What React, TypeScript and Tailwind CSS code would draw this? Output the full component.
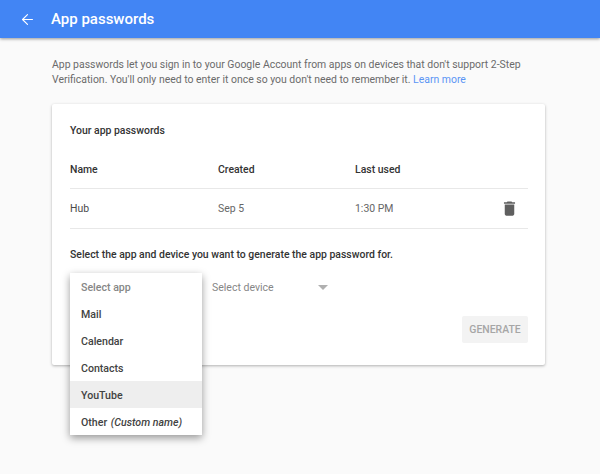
import { ArrowLeft } from "lucide-react";

const MENU = ["Mail", "Calendar", "Contacts", "YouTube"];

function TrashIcon() {
  return (
    <svg width="19" height="19" viewBox="0 0 24 24" fill="#5f5f5f">
      <path d="M6 19c0 1.1.9 2 2 2h8c1.1 0 2-.9 2-2V7H6v12zM19 4h-3.5l-1-1h-5l-1 1H5v2h14V4z" />
    </svg>
  );
}

export default function App() {
  return (
    <div className="w-[600px] h-[474px] overflow-hidden bg-[#fafafa] font-['Roboto',sans-serif] antialiased">
      <header className="relative h-[38px] bg-[#4285f4] shadow-[0_1px_3px_rgba(0,0,0,0.4)] flex items-center text-white">
        <ArrowLeft className="ml-[19px] w-[17px] h-[17px]" strokeWidth={1.6} />
        <h1 className="ml-[15px] text-[15px] leading-none font-medium">App passwords</h1>
      </header>

      <p className="mt-[19px] ml-[52px] w-[480px] text-[10.45px] leading-[15px] text-[#6b6b6b]">
        App passwords let you sign in to your Google Account from apps on devices that don't support 2-Step
        Verification. You'll only need to enter it once so you don't need to remember it.{" "}
        <span className="text-[#5a95f5]">Learn more</span>
      </p>

      <section className="relative mt-[17px] ml-[52px] w-[493px] h-[261px] bg-white rounded-[2px] shadow-[0_1px_3px_rgba(0,0,0,0.3)] pl-[18px] pr-[17px]">
        <h2 className="pt-[20px] text-[10.45px] leading-[13px] font-medium text-[#333333]">Your app passwords</h2>

        <div className="mt-[26px] h-[26px] flex text-[10.45px] leading-[13px] font-medium text-[#333333] border-b border-[#e8e8e8]">
          <span className="w-[148px]">Name</span>
          <span className="w-[137px]">Created</span>
          <span>Last used</span>
        </div>

        <div className="h-[40px] flex items-center text-[10.45px] text-[#666666] border-b border-[#e8e8e8]">
          <span className="w-[148px] text-[#4a4a4a]">Hub</span>
          <span className="w-[137px]">Sep 5</span>
          <span>1:30 PM</span>
          <span className="ml-auto mr-[9px] flex">
            <TrashIcon />
          </span>
        </div>

        <p className="mt-[19px] text-[10.45px] leading-[13px] font-medium text-[#333333]">
          Select the app and device you want to generate the app password for.
        </p>

        <div className="mt-[20px] ml-[142px] flex items-center h-[13px] text-[10.5px] text-[#868686]">
          <span className="w-[106px]">Select device</span>
          <span className="w-0 h-0 border-x-[5px] border-x-transparent border-t-[5px] border-t-[#b0b0b0]" />
        </div>

        <div className="mt-[22px] flex justify-end">
          <button className="w-[66px] h-[27px] rounded-[2px] bg-[#f3f3f3] text-[10.45px] font-medium text-[#a6a6a6]">
            GENERATE
          </button>
        </div>

        {/* open dropdown sits over the card */}
        <div className="absolute left-[18px] top-[169px] w-[132px] bg-white shadow-[0_3px_8px_rgba(0,0,0,0.4)] text-[10.6px] font-medium text-[#424242]">
          <div className="h-[27px] flex items-center px-[11px] pt-[2px] text-[#868686]">Select app</div>
          {MENU.map((m) => (
            <div key={m} className={`h-[27px] flex items-center px-[11px] pt-[2px] ${m === "YouTube" ? "bg-[#eeeeee]" : ""}`}>
              {m}
            </div>
          ))}
          <div className="h-[27px] flex items-center px-[11px] pt-[2px]">
            Other&nbsp;<em className="ml-[1px]">(Custom name)</em>
          </div>
        </div>
      </section>
    </div>
  );
}
